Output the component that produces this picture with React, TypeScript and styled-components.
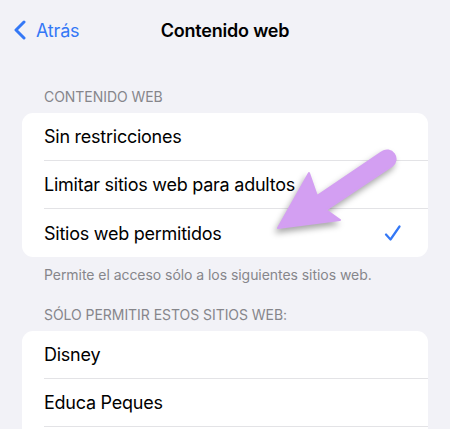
import React from "react";
import styled, { createGlobalStyle } from "styled-components";

const Global = createGlobalStyle`
  html, body { margin: 0; padding: 0; background: #f2f2f7; }
  body { font-family: Inter, "Noto Sans", sans-serif; -webkit-font-smoothing: antialiased; }
`;

const Screen = styled.div`
  position: relative;
  width: 450px;
  height: 429px;
  overflow: hidden;
  background: #f2f2f7;
`;

const Nav = styled.div`
  display: grid;
  grid-template-columns: 1fr auto 1fr;
  align-items: center;
  height: 60px;
  padding: 0 14px;
  box-sizing: border-box;
`;

const Back = styled.div`
  display: flex;
  align-items: center;
  gap: 10px;
  color: #3478f6;
  font-size: 18px;
  letter-spacing: -0.2px;
`;

const Title = styled.div`
  font-size: 18px;
  font-weight: 600;
  color: #000;
  letter-spacing: -0.2px;
`;

const Content = styled.div`
  padding: 0 22px;
`;

const SectionHeader = styled.div<{ $top: number }>`
  margin-top: ${(p) => p.$top}px;
  padding-left: 22px;
  font-size: 14px;
  line-height: 18px;
  color: #86868b;
  letter-spacing: -0.05px;
  margin-bottom: 7px;
`;

const Footer = styled.div`
  padding-left: 22px;
  margin-top: 9px;
  font-size: 14px;
  line-height: 18px;
  color: #86868b;
  letter-spacing: -0.05px;
`;

const Card = styled.div`
  background: #fff;
  border-radius: 11px;
  overflow: hidden;
`;

const Row = styled.div<{ $last?: boolean }>`
  display: flex;
  align-items: center;
  justify-content: space-between;
  height: 48px;
  margin-left: 22px;
  padding-right: 26px;
  box-sizing: border-box;
  border-bottom: ${(p) => (p.$last ? "none" : "1px solid #e3e3e6")};
  font-size: 18px;
  color: #000;
  letter-spacing: -0.25px;
`;

const ArrowLayer = styled.svg`
  position: absolute;
  left: 0;
  top: 0;
  width: 450px;
  height: 429px;
  pointer-events: none;
  filter: drop-shadow(-2px 4px 3px rgba(0, 0, 0, 0.35));
`;

const Check = () => (
  <svg width="18" height="16" viewBox="0 0 18 16">
    <path d="M2 9.5 L6.5 14.5 L15.5 1.5" fill="none" stroke="#3478f6" strokeWidth="2.2" strokeLinecap="round" strokeLinejoin="round" />
  </svg>
);

export default function App() {
  return (
    <Screen>
      <Global />
      <Nav>
        <Back>
          <svg width="12" height="20" viewBox="0 0 12 20">
            <path d="M10 2 L2 10 L10 18" fill="none" stroke="#3478f6" strokeWidth="3" strokeLinecap="round" strokeLinejoin="round" />
          </svg>
          <span>Atrás</span>
        </Back>
        <Title>Contenido web</Title>
        <div />
      </Nav>
      <Content>
        <SectionHeader $top={28}>CONTENIDO WEB</SectionHeader>
        <Card>
          <Row>Sin restricciones</Row>
          <Row>Limitar sitios web para adultos</Row>
          <Row $last>
            Sitios web permitidos
            <Check />
          </Row>
        </Card>
        <Footer>Permite el acceso sólo a los siguientes sitios web.</Footer>
        <SectionHeader $top={22}>SÓLO PERMITIR ESTOS SITIOS WEB:</SectionHeader>
        <Card>
          <Row>Disney</Row>
          <Row>Educa Peques</Row>
          <Row $last />
        </Card>
      </Content>
      <ArrowLayer viewBox="0 0 450 429">
        <path
          d="M309 173 L317 196 L382 152 A8.5 8.5 0 0 1 392 166 L326 210 L340 220 L278 228 Z"
          fill="#d39ff2"
          stroke="#d39ff2"
          strokeWidth="2"
          strokeLinejoin="round"
        />
      </ArrowLayer>
    </Screen>
  );
}
